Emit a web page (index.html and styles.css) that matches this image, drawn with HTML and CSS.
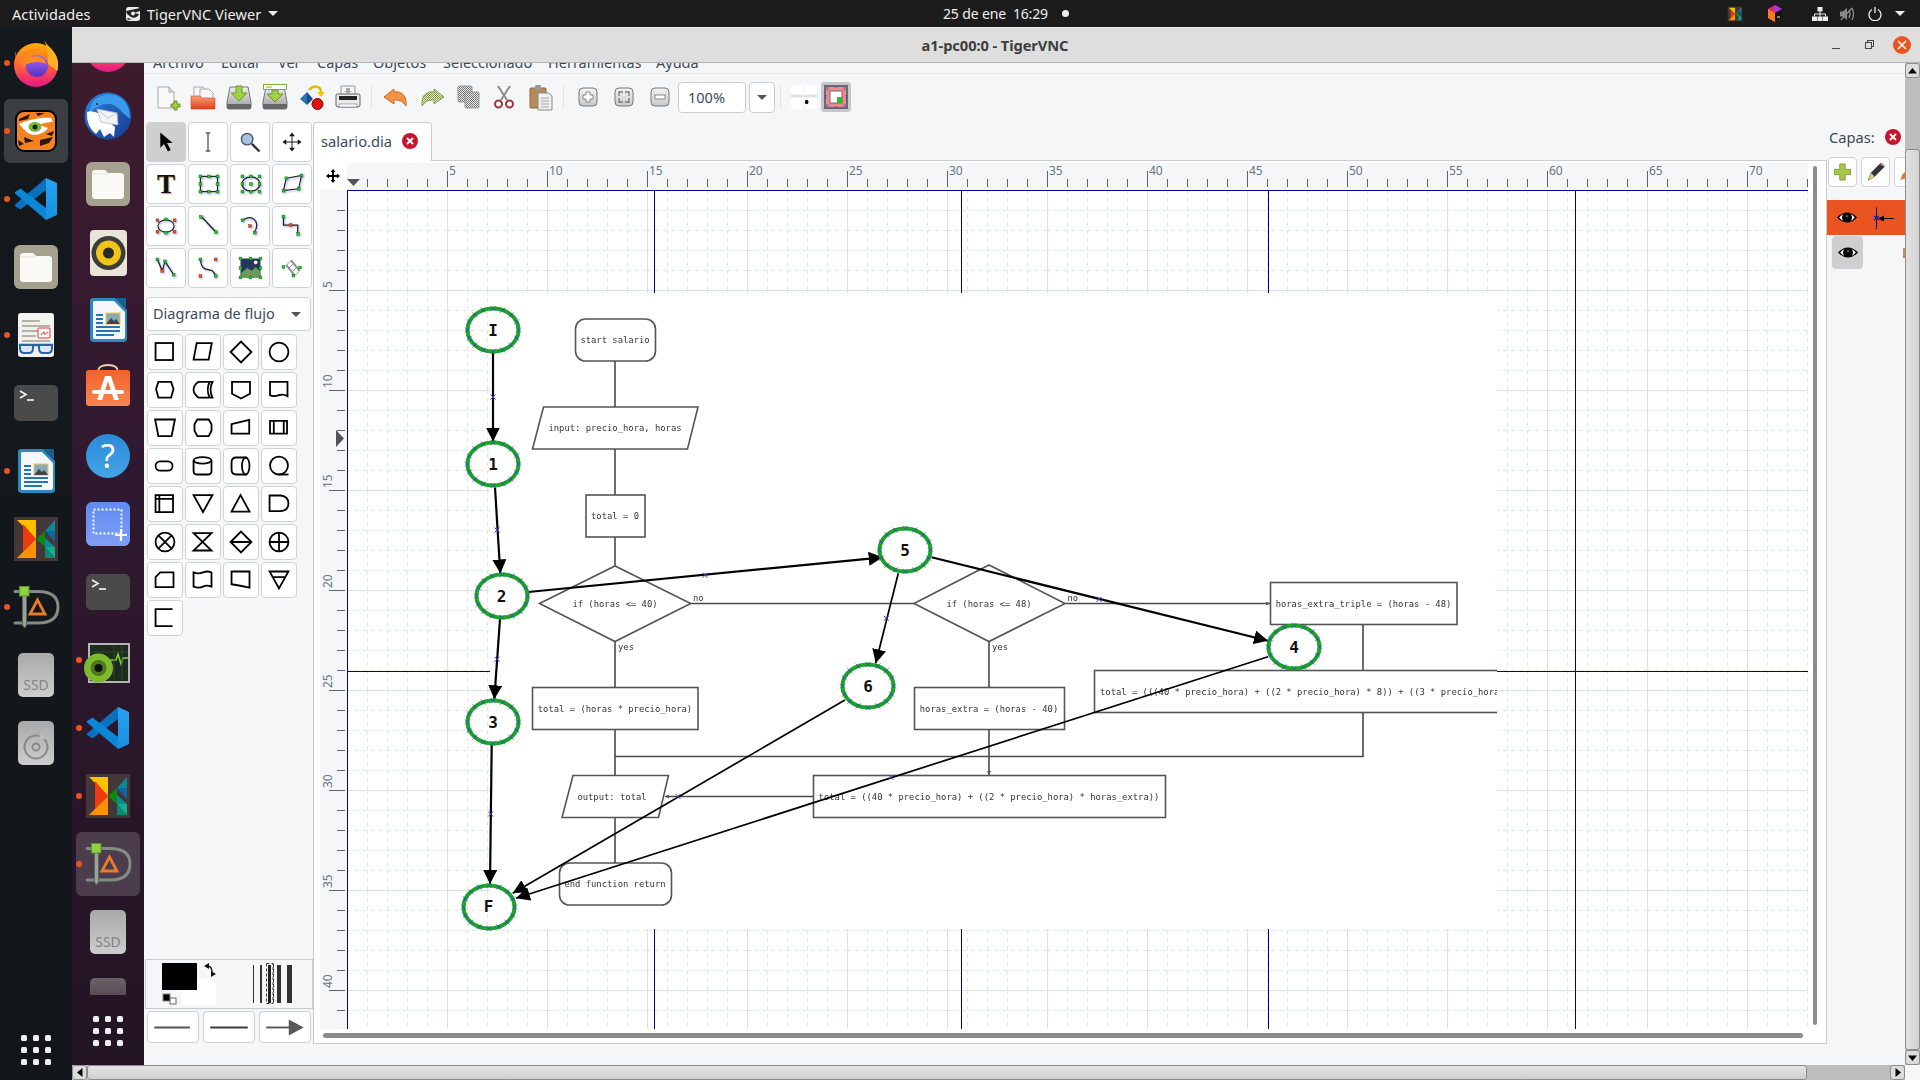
FILE: index.html
```html
<!DOCTYPE html>
<html lang="es">
<head>
<meta charset="utf-8">
<title>a1-pc00:0 - TigerVNC</title>
<link rel="stylesheet" href="styles.css">
</head>
<body>
<svg class="defs" aria-hidden="true">
  <defs>
    <linearGradient id="g-ff" x1="0" y1="0" x2="0" y2="1"><stop offset="0" stop-color="#ffb000"/><stop offset=".55" stop-color="#ff5c3a"/><stop offset="1" stop-color="#e3158e"/></linearGradient>
    <linearGradient id="g-ffp" x1="0" y1="0" x2="0" y2="1"><stop offset="0" stop-color="#a06cf0"/><stop offset="1" stop-color="#5a2fc0"/></linearGradient>
    <linearGradient id="g-bird" x1="0" y1="0" x2="1" y2="1"><stop offset="0" stop-color="#2a86dc"/><stop offset="1" stop-color="#1a3790"/></linearGradient>
    <linearGradient id="g-ssd" x1="0" y1="0" x2="0" y2="1"><stop offset="0" stop-color="#a9a9a9"/><stop offset="1" stop-color="#cdcdcd"/></linearGradient>
    <linearGradient id="g-store" x1="0" y1="0" x2="0" y2="1"><stop offset="0" stop-color="#f2622c"/><stop offset="1" stop-color="#f98650"/></linearGradient>
    <linearGradient id="g-help" x1="0" y1="0" x2="0" y2="1"><stop offset="0" stop-color="#2a8ad8"/><stop offset="1" stop-color="#45a4e6"/></linearGradient>
    <linearGradient id="g-shot" x1="0" y1="0" x2="0" y2="1"><stop offset="0" stop-color="#5f8af0"/><stop offset="1" stop-color="#7f9ef5"/></linearGradient>
    <linearGradient id="g-code" x1="0" y1="0" x2="0" y2="1"><stop offset="0" stop-color="#27a3f2"/><stop offset="1" stop-color="#1a8fe0"/></linearGradient>
    <linearGradient id="g-disk" x1="0" y1="0" x2="0" y2="1"><stop offset="0" stop-color="#f0f0f0"/><stop offset="1" stop-color="#9a9a9a"/></linearGradient>
    <linearGradient id="g-fold" x1="0" y1="0" x2="0" y2="1"><stop offset="0" stop-color="#f8a27a"/><stop offset="1" stop-color="#df4016"/></linearGradient>
    <linearGradient id="g-dark" x1="0" y1="0" x2="0" y2="1"><stop offset="0" stop-color="#6b6068"/><stop offset="1" stop-color="#3a2c37"/></linearGradient>
    <linearGradient id="g-zb" x1="0" y1="0" x2="0" y2="1"><stop offset="0" stop-color="#f4f4f4"/><stop offset="1" stop-color="#c8c8c8"/></linearGradient>
    <pattern id="chk" width="2" height="2" patternUnits="userSpaceOnUse"><rect width="2" height="2" fill="#f2f2f2"/><rect width="1" height="1" fill="#6e6e6e"/><rect x="1" y="1" width="1" height="1" fill="#6e6e6e"/></pattern>
    <pattern id="chkg" width="2" height="2" patternUnits="userSpaceOnUse"><rect width="2" height="2" fill="#e6edd2"/><rect width="1" height="1" fill="#7c9a3a"/><rect x="1" y="1" width="1" height="1" fill="#7c9a3a"/></pattern>
    <symbol id="eye" viewBox="0 0 24 16"><path d="M1 8Q12-3 23 8Q12 19 1 8Z" fill="#000"/><path d="M3.500 8Q6 5 8 4.400A5 5 0 0 0 8 11.600Q6 11 3.500 8ZM20.500 8Q18 5 16 4.400A5 5 0 0 1 16 11.600Q18 11 20.500 8Z" fill="#fff"/><circle cx="12" cy="6.500" r="1.300" fill="#555"/></symbol>
    <symbol id="d-ff" viewBox="0 0 48 48"><circle cx="24" cy="26" r="22" fill="url(#g-ff)"/><path d="M32 1c3 5 6 7 9 11 5 6 6 13 4.500 20L36 25c0-9 0-16-4-24Z" fill="#ffb01f"/><path d="M3 12c1 4 2 7 5 8 3-8 14-12 21-9-5 0-9 3-11 7 6-2 13 2 14 9-6-3-15-1-21 1-4-3-8-8-8-16Z" fill="#ff7a2e"/><circle cx="25" cy="27" r="11" fill="url(#g-ffp)"/><path d="M10 20c4-8 14-12 20-9-5 0-9 3-11 7 6-2 14 0 15 7-6-3-14-2-19 0-2-1-4-3-5-5Z" fill="#ff8c1a"/></symbol>
    <symbol id="d-vnc" viewBox="0 0 48 48"><rect x="3" y="3" width="42" height="42" rx="9" fill="#000"/><rect x="5" y="5" width="38" height="38" rx="7" fill="#f58220"/><path d="M7 17c8-4 22-7 32-6l2 4c-6 0-10 1-14 3l9 3c-4 6-14 9-20 5-4-3-6-6-9-9Z" fill="#fff"/><ellipse cx="23" cy="20" rx="6.500" ry="5" fill="#7db53b"/><circle cx="23" cy="20" r="2.500" fill="#0d2a0d"/><path d="M7 12l11-5-2 5-9 2ZM24 6l9 0-7 3ZM42 24l-8 3 6 2ZM12 30l10 4-9 2ZM28 33l13-3-4 6-9 3ZM6 33l6 4-5 2Z" fill="#2a1608"/></symbol>
    <symbol id="d-code" viewBox="0 0 48 48"><path d="M34 3V15L8.500 34.500L3 31V29.500Z" fill="#0a72bc"/><path d="M34 45V33L8.500 13.500L3 17V18.500Z" fill="#0c86d6"/><path d="M34 3L45 8V40L34 45V33V15Z" fill="url(#g-code)"/></symbol>
    <symbol id="d-files" viewBox="0 0 48 48"><rect x="2" y="2" width="44" height="44" rx="6" fill="#a6a08e"/><path d="M8 13q0-3 3-3h10l3 3h13q3 0 3 3v20q0 3-3 3H11q-3 0-3-3Z" fill="#fbfaf6"/><path d="M8 14h16" stroke="#e4e1d8"/></symbol>
    <symbol id="d-doc" viewBox="0 0 48 48"><rect x="6" y="2" width="36" height="44" rx="3" fill="#f2f2ee"/><path d="M10 10h18M10 15h28M10 20h16M10 25h14M10 30h28" stroke="#b5b2a6" stroke-width="2"/><rect x="26" y="17" width="12" height="10" rx="1" fill="#f7f7f7" stroke="#e23a3a"/><path d="M29 24q4-5 3-2t4-1" stroke="#e23a3a" fill="none"/><path d="M7 34h34" stroke="#2a64a8" stroke-width="2.500"/><path d="M8 34h13v3q0 5-4 5h-5q-4 0-4-5ZM27 34h13v3q0 5-4 5h-5q-4 0-4-5Z" fill="#dfe6ee" stroke="#2a64a8" stroke-width="2"/></symbol>
    <symbol id="d-term" viewBox="0 0 48 48"><rect x="2" y="6" width="44" height="36" rx="5" fill="#4a4a4a"/><path d="M8 12l6 3.500-6 3.500" fill="none" stroke="#eee" stroke-width="1.700"/><path d="M15 21h7" stroke="#eee" stroke-width="1.700"/></symbol>
    <symbol id="d-writer" viewBox="0 0 48 48"><path d="M9 2h22l12 12v28q0 4-4 4H10q-4 0-4-4V5q0-3 3-3Z" fill="#2e88c0"/><path d="M10 5h20l11 11v25q0 2-2 2H10q-1 0-1-2V7q0-2 1-2Z" fill="#f4f7fa"/><path d="M31 2h11v11Z" fill="#1a5e90"/><g stroke="#2178b5" stroke-width="2"><path d="M12 19h7M12 23h7M12 27h7M12 31h24M12 35h24M12 39h18"/></g><rect x="22" y="17" width="14" height="11" fill="#8ab" stroke="#f7c843"/><path d="M22 28l5-6 3 3 2-2 4 5Z" fill="#444"/></symbol>
    <symbol id="d-kite" viewBox="0 0 48 48"><rect x="2" y="2" width="44" height="44" fill="#44373a"/><path d="M5 5h19v19Z" fill="#ffc000"/><path d="M11 9l13 15L11 37Z" fill="#ee3a10"/><path d="M5 43L24 24V43Z" fill="#ff9000"/><path d="M24 24l9-8v16Z" fill="#0a8a10"/><path d="M33 16L43 5V16Z" fill="#0e8a96"/><path d="M33 16h10v11L33 16Z" fill="#1068a0"/><path d="M33 32l10 0-10-9Z" fill="#0e8a96"/><path d="M33 32h10v11Z" fill="#11b08a"/><path d="M33 32v11h10Z" fill="#0a8a78"/></symbol>
    <symbol id="d-dia" viewBox="0 0 48 48"><path d="M3 8.500H26Q46 8.500 46 24 46 40 26 40H3" fill="none" stroke="#838c83" stroke-width="3" stroke-linecap="round"/><path d="M10.500 10V42L12.500 45 14.500 42V10Z" fill="#9aa39a" stroke="#5c645c"/><rect x="7.500" y="3.500" width="9.500" height="9.500" fill="#8fd13f" stroke="#5e8e2a"/><path d="M25.500 17L18 31H33Z" fill="none" stroke="#e97b2d" stroke-width="2.800"/></symbol>
    <symbol id="d-ssd" viewBox="0 0 48 48"><rect x="6" y="2" width="36" height="44" rx="5" fill="url(#g-ssd)"/></symbol>
    <symbol id="d-disc" viewBox="0 0 48 48"><rect x="6" y="2" width="36" height="44" rx="5" fill="url(#g-ssd)"/><circle cx="24" cy="28" r="11.500" fill="none" stroke="#8a8a8a" stroke-width="2"/><circle cx="24" cy="28" r="3.500" fill="none" stroke="#8a8a8a" stroke-width="2"/><path d="M28 16l4 4" stroke="#bdbdbd" stroke-width="3"/></symbol>
    <symbol id="d-disc2" viewBox="0 0 48 48"><rect x="6" y="2" width="36" height="44" rx="5" fill="url(#g-dark)"/></symbol>
    <symbol id="d-bird" viewBox="0 0 48 48"><circle cx="24" cy="24" r="23.500" fill="url(#g-bird)"/><path d="M10 8Q22-1 34 4 46 10 46 27L39 21Q30 10 20 12 12 14 5 22 6 14 10 8Z" fill="#3a9bec"/><path d="M3 20Q2 34 12 42L16 37 20 45 26 41 30 45 31 35 16 22Q8 18 3 20Z" fill="#fff"/><path d="M13 17L33 21 34 33 17 30Z" fill="#f2f3f7" stroke="#b7bcc9" stroke-width=".8"/><path d="M13 17L24 26 33 21" fill="none" stroke="#b7bcc9" stroke-width=".8"/><circle cx="13" cy="12" r="1" fill="#123"/></symbol>
    <symbol id="d-rhythm" viewBox="0 0 48 48"><rect x="6" y="2" width="37" height="46" rx="4" fill="#e9e5d9"/><circle cx="24.500" cy="25" r="17" fill="#3c3c38"/><circle cx="24.500" cy="25" r="12.500" fill="#f0c419"/><circle cx="24.500" cy="25" r="5.500" fill="#2a2a28"/></symbol>
    <symbol id="d-store" viewBox="0 0 48 48"><path d="M14 8q0-7 10-7t10 7" fill="none" stroke="#eccdaa" stroke-width="1.800"/><rect x="2" y="6" width="44" height="36" rx="3" fill="url(#g-store)"/><path d="M21 12h6l8 24h-5l-6-19-6 19h-5Z" fill="#fff"/><rect x="8" y="26" width="32" height="4" rx="2" fill="#fff"/></symbol>
    <symbol id="d-help" viewBox="0 0 48 48"><circle cx="24" cy="24" r="22" fill="url(#g-help)"/></symbol>
    <symbol id="d-shot" viewBox="0 0 48 48"><rect x="2" y="2" width="44" height="44" rx="6" fill="url(#g-shot)"/><rect x="9.500" y="9.500" width="28" height="24" fill="none" stroke="#fff" stroke-width="2" stroke-dasharray="2 2"/><path d="M37 29v12M31 35h12" stroke="#fff" stroke-width="2.200"/></symbol>
    <symbol id="d-mon" viewBox="0 0 48 48"><rect x="5" y="8" width="40" height="38" fill="#1e2a1e" stroke="#b5b5b5" stroke-width="2"/><path d="M26 24h6l2-6 3 10 2-6h6" fill="none" stroke="#7fd13b" stroke-width="1.500"/><path d="M30 10v34M38 10v34M7 16h36" stroke="#2f4a2f"/><circle cx="14.500" cy="32" r="14.500" fill="#7fb92f"/><circle cx="14.500" cy="32" r="8" fill="#4d7a1a"/><circle cx="14.500" cy="32" r="4" fill="#111"/></symbol>
  </defs>
</svg>

<header class="topbar">
  <span class="tb-act">Actividades</span>
  <span class="tb-app">
    <svg class="tb-appic" width="16" height="16" viewBox="0 0 16 16"><rect x="1" y="1" width="14" height="14" rx="3" fill="#eee"/><path d="M1 5l14-3v3L9 7l5 1c-1 3-5 5-8 3L2 8Z" fill="#222"/><circle cx="8" cy="7.500" r="2" fill="#eee"/><path d="M2 12l5 1-4 1Z" fill="#222"/></svg>
    TigerVNC Viewer
    <i class="caret"></i>
  </span>
  <span class="tb-clock">25 de ene&nbsp; 16:29</span>
  <i class="tb-dot"></i>
  <span class="tb-right">
    <svg width="16" height="16" viewBox="0 0 48 48"><use href="#d-kite"/></svg>
    <svg class="tr-jet" width="16" height="18" viewBox="0 0 16 18"><path d="M8 0l7 4v9l-7 4-7-4V4Z" fill="#e0218a"/><path d="M8 0l7 4-7 4Z" fill="#9b3fd8"/><path d="M1 4l7 4v9l-7-4Z" fill="#ff7a1a"/><path d="M8 8l7-4v9l-7 4Z" fill="#111"/><path d="M10 12h3" stroke="#fff"/></svg>
    <svg width="16" height="14" viewBox="0 0 16 14" class="tr-net"><path d="M5.500 0h5v4.500h-5ZM0 9.500h5v4.500H0ZM5.500 9.500h5v4.500h-5ZM11 9.500h5v4.500h-5Z" fill="#eee"/><path d="M8 4.500V9.500M2.500 9.500V7h11v2.500" stroke="#eee" fill="none"/></svg>
    <svg width="16" height="14" viewBox="0 0 16 14" class="tr-vol"><path d="M0 4.500h3L7 1v12L3 9.500H0Z" fill="#8a8a8a"/><path d="M9 3q2 4 0 8M12 1q3 6 0 12" stroke="#8a8a8a" fill="none" stroke-width="1.300"/><path d="M1 13L12 1" stroke="#8a8a8a" stroke-width="1.300"/></svg>
    <svg width="14" height="14" viewBox="0 0 14 14" class="tr-pow"><path d="M4 2.500a6 6 0 1 0 6 0M7 0v6" stroke="#eee" fill="none" stroke-width="1.300"/></svg>
    <i class="caret"></i>
  </span>
</header>

<div class="desktop">
  <nav class="dock dock-outer">
    <div class="dock-items">
      <div class="dk run"><span class="tile"><svg class="di"><use href="#d-ff"/></svg></span></div>
      <div class="dk run"><span class="tile on"><svg class="di"><use href="#d-vnc"/></svg></span></div>
      <div class="dk run"><span class="tile"><svg class="di"><use href="#d-code"/></svg></span></div>
      <div class="dk"><span class="tile"><svg class="di"><use href="#d-files"/></svg></span></div>
      <div class="dk run"><span class="tile"><svg class="di"><use href="#d-doc"/></svg></span></div>
      <div class="dk"><span class="tile"><svg class="di"><use href="#d-term"/></svg></span></div>
      <div class="dk run"><span class="tile"><svg class="di"><use href="#d-writer"/></svg></span></div>
      <div class="dk"><span class="tile"><svg class="di"><use href="#d-kite"/></svg></span></div>
      <div class="dk run"><span class="tile"><svg class="di"><use href="#d-dia"/></svg></span></div>
      <div class="dk"><span class="tile"><svg class="di"><use href="#d-ssd"/></svg><span class="ssd">SSD</span></span></div>
      <div class="dk"><span class="tile"><svg class="di"><use href="#d-disc"/></svg></span></div>
    </div>
    <div class="apps apps-outer"><i></i><i></i><i></i><i></i><i></i><i></i><i></i><i></i><i></i></div>
  </nav>

  <main class="window">
    <div class="titlebar">
      <span></span>
      <span class="title">a1-pc00:0 - TigerVNC</span>
      <span class="wctl">
        <span class="wb"><i class="w-min"></i></span>
        <span class="wb"><i class="w-max"></i></span>
        <span class="wb"><i class="w-close"><svg width="10" height="10" viewBox="0 0 10 10"><path d="M1 1l8 8M9 1L1 9" stroke="#fff" stroke-width="1.500"/></svg></i></span>
      </span>
    </div>

    <div class="view">
      <div class="view-row">
        <nav class="dock dock-inner">
          <div class="dock-items">
            <div class="dk dk-first"><span class="tile"><svg class="di"><use href="#d-ff"/></svg></span></div>
            <div class="dk"><span class="tile"><svg class="di"><use href="#d-bird"/></svg></span></div>
            <div class="dk"><span class="tile"><svg class="di"><use href="#d-files"/></svg></span></div>
            <div class="dk"><span class="tile"><svg class="di"><use href="#d-rhythm"/></svg></span></div>
            <div class="dk"><span class="tile"><svg class="di"><use href="#d-writer"/></svg></span></div>
            <div class="dk"><span class="tile"><svg class="di"><use href="#d-store"/></svg></span></div>
            <div class="dk"><span class="tile"><svg class="di"><use href="#d-help"/></svg><span class="qm">?</span></span></div>
            <div class="dk"><span class="tile"><svg class="di"><use href="#d-shot"/></svg></span></div>
            <div class="dk"><span class="tile"><svg class="di"><use href="#d-term"/></svg></span></div>
            <div class="dk run"><span class="tile"><svg class="di"><use href="#d-mon"/></svg></span></div>
            <div class="dk run"><span class="tile"><svg class="di"><use href="#d-code"/></svg></span></div>
            <div class="dk run"><span class="tile"><svg class="di"><use href="#d-kite"/></svg></span></div>
            <div class="dk run"><span class="tile on"><svg class="di"><use href="#d-dia"/></svg></span></div>
            <div class="dk"><span class="tile"><svg class="di"><use href="#d-ssd"/></svg><span class="ssd">SSD</span></span></div>
            <div class="dk"><span class="tile"><svg class="di"><use href="#d-disc2"/></svg></span></div>
          </div>
          <div class="apps apps-inner"><i></i><i></i><i></i><i></i><i></i><i></i><i></i><i></i><i></i></div>
        </nav>

        <section class="app">
          <div class="menubar"><div class="menu-in"><span>Archivo</span><span>Editar</span><span>Ver</span><span>Capas</span><span>Objetos</span><span>Seleccionado</span><span>Herramientas</span><span>Ayuda</span></div></div>

          <div class="toolbar">
            <svg class="tbi" viewBox="0 0 36 30"><path d="M8 5h11l5 5v16H8Z" fill="#f8f8f8" stroke="#aaa"/><path d="M19 5v5h5" fill="#ddd" stroke="#aaa"/><path d="M24 19h3v3h3v3h-3v3h-3v-3h-3v-3h3Z" fill="#a5c84a" stroke="#6f8f25"/></svg>
            <svg class="tbi" viewBox="0 0 36 30"><path d="M8 5h9l3 3v9H8Z" fill="#f6f6f6" stroke="#aaa"/><path d="M14 7h9l4 4v9H14Z" fill="#f6f6f6" stroke="#aaa"/><path d="M5 14h9l2 2h13v11H5Z" fill="url(#g-fold)" stroke="#c9481f" stroke-width=".6"/></svg>
            <svg class="tbi" viewBox="0 0 36 30"><path d="M8 5h18l3 15v5q0 2-2 2H7q-2 0-2-2v-5Z" fill="url(#g-disk)" stroke="#777"/><path d="M5 22h24v3q0 2-2 2H7q-2 0-2-2Z" fill="#666"/><path d="M14 4h6v7h5l-8 8-8-8h5Z" fill="#a2d145" stroke="#6f9a22"/></svg>
            <svg class="tbi" viewBox="0 0 36 30"><path d="M8 5h18l3 15v5q0 2-2 2H7q-2 0-2-2v-5Z" fill="url(#g-disk)" stroke="#777"/><path d="M5 22h24v3q0 2-2 2H7q-2 0-2-2Z" fill="#666"/><rect x="5.500" y="2.500" width="23" height="5" fill="#fff" stroke="#7fb02a"/><path d="M8 5h6" stroke="#7fb02a"/><path d="M14 8h6v4h5l-8 8-8-8h5Z" fill="#a2d145" stroke="#6f9a22"/></svg>
            <svg class="tbi" viewBox="0 0 36 30"><path d="M13 10L6 17l7 6Z" fill="#2a6fb0"/><path d="M13 10l6 7-6 6Z" fill="#1a4a8c"/><circle cx="23.500" cy="22" r="5.500" fill="#e01010" stroke="#900"/><path d="M15 8q4-5 9-3 3 1 3 6" fill="none" stroke="#e8b90c" stroke-width="2.400"/><path d="M23 10l4 5 4-5Z" fill="#f2c610"/></svg>
            <svg class="tbi" viewBox="0 0 36 30"><path d="M11 4h14v9H11Z" fill="#f5f5f5" stroke="#999"/><path d="M16 6h4v3h2l-4 3-4-3h2Z" fill="#aaa"/><path d="M7 12h22q1 0 1 2v9q0 2-2 2H8q-2 0-2-2v-9q0-2 1-2Z" fill="#e9e9e9" stroke="#666"/><rect x="9" y="14" width="18" height="4" fill="#222"/><rect x="9" y="22" width="18" height="3" fill="#fff" stroke="#777" stroke-width=".6"/></svg>
            <i class="sep"></i>
            <svg class="tbi" viewBox="0 0 36 30"><path d="M16 7l-10 8 10 7v-4q8-1 12 6 1-10-5-13-3-2-7-1Z" fill="#f09248" stroke="#d06a22"/></svg>
            <svg class="tbi" viewBox="0 0 36 30"><path d="M20 7l10 8-10 7v-4q-8-1-12 6-1-10 5-13 3-2 7-1Z" fill="url(#chkg)" stroke="#8aa64a"/></svg>
            <svg class="tbi" viewBox="0 0 36 30"><rect x="8" y="4" width="14" height="16" rx="1" fill="url(#chk)" stroke="#999"/><rect x="15" y="10" width="14" height="16" rx="1" fill="url(#chk)" stroke="#999"/></svg>
            <svg class="tbi" viewBox="0 0 36 30"><path d="M12 4l9 14M24 4l-9 14" stroke="#8a8a8a" stroke-width="2"/><circle cx="12.500" cy="22" r="3.500" fill="none" stroke="#a03a3a" stroke-width="2"/><circle cx="23.500" cy="22" r="3.500" fill="none" stroke="#a03a3a" stroke-width="2"/></svg>
            <svg class="tbi" viewBox="0 0 36 30"><rect x="8" y="6" width="16" height="20" rx="1" fill="#b38a5a" stroke="#8a6a40"/><rect x="13" y="3" width="6" height="5" rx="1" fill="#9a9a9a"/><path d="M16 11h11l3 3v14H16Z" fill="#eee" stroke="#8a8a8a"/><path d="M19 16h8M19 19h8M19 22h8M19 25h8" stroke="#aaa"/></svg>
            <i class="sep"></i>
            <svg class="tbi" viewBox="0 0 36 30"><rect x="9" y="6" width="18" height="18" rx="4" fill="url(#g-zb)" stroke="#777"/><path d="M16 10h4v3h3v4h-3v3h-4v-3h-3v-4h3Z" fill="#fff" stroke="#888"/></svg>
            <svg class="tbi" viewBox="0 0 36 30"><rect x="9" y="6" width="18" height="18" rx="4" fill="url(#g-zb)" stroke="#777"/><path d="M13 14v-4h4M19 10h4v4M13 16v4h4M19 20h4v-4" fill="none" stroke="#777" stroke-width="1.300"/></svg>
            <svg class="tbi" viewBox="0 0 36 30"><rect x="9" y="6" width="18" height="18" rx="4" fill="url(#g-zb)" stroke="#777"/><rect x="13" y="13" width="10" height="4" fill="#fff" stroke="#888"/></svg>
            <div class="combo">100%</div>
            <div class="combo-btn"><i class="caret dark"></i></div>
            <i class="sep sep2"></i>
            <svg class="snap" viewBox="0 0 26 24"><rect width="26" height="24" fill="#fff"/><path d="M0 11h26" stroke="#dde6e4" stroke-width="3"/><path d="M13 0v24" stroke="#eef2f1"/><ellipse cx="15.700" cy="17" rx="1.800" ry="2.300" fill="#111"/></svg>
            <span class="snapobj"><svg width="24" height="24" viewBox="0 0 24 24"><rect x="1" y="1" width="22" height="22" fill="#f08a8a" stroke="#6a6a6a" stroke-width="2"/><rect x="6" y="6" width="12" height="12" fill="#fff" stroke="#6a6a6a" stroke-width="1"/><rect x="13" y="12" width="5" height="6" fill="#2cc02c"/><path d="M2 2l3 3M5 2L2 5M10 0l3 3M13 0l-3 3M19 2l3 3M22 2l-3 3M2 19l3 3M5 19l-3 3M19 19l3 3M22 19l-3 3M0 10l3 3M3 10l-3 3M21 10l3 3M24 10l-3 3M10 21l3 3M13 21l-3 3" stroke="#4a4ae8" stroke-width=".7"/></svg></span>
          </div>

          <div class="main">
            <aside class="tools">
              <div class="tool-grid">
                <div class="tool sel"><svg viewBox="0 0 40 40"><path d="M14 10V26l4-4 4 8 3-1.500-4-7.500h6Z" fill="#000"/></svg></div>
                <div class="tool"><svg viewBox="0 0 40 40"><path d="M17.500 10.500h5M17.500 29.500h5M20 10.500v19" stroke="#111" fill="none"/></svg></div>
                <div class="tool"><svg viewBox="0 0 40 40"><circle cx="17" cy="17" r="6" fill="#a8c4e4" stroke="#556"  stroke-width="1.500"/><path d="M22 22l8 8" stroke="#333" stroke-width="2.600"/></svg></div>
                <div class="tool"><svg viewBox="0 0 40 40"><path d="M20 12v16M12 20h16" stroke="#111"/><path d="M20 10l-3 4h6ZM20 30l-3-4h6ZM10 20l4-3v6ZM30 20l-4-3v6Z" fill="#111"/></svg></div>

                <div class="tool"><span class="T">T</span></div>
                <div class="tool sh"><svg viewBox="0 0 40 40"><rect x="12" y="12" width="18" height="16" fill="none" stroke="#222" stroke-width="1.200"/><g class="hg"><rect x="10.500" y="10.500" width="3" height="3"/><rect x="19.500" y="10.500" width="3" height="3"/><rect x="28.500" y="10.500" width="3" height="3"/><rect x="10.500" y="18.500" width="3" height="3"/><rect x="28.500" y="18.500" width="3" height="3"/><rect x="10.500" y="26.500" width="3" height="3"/><rect x="19.500" y="26.500" width="3" height="3"/><rect x="28.500" y="26.500" width="3" height="3"/></g></svg></div>
                <div class="tool sh"><svg viewBox="0 0 40 40"><ellipse cx="21" cy="20" rx="9.500" ry="7.500" fill="none" stroke="#222" stroke-width="1.200"/><g class="hg"><rect x="10.500" y="10.500" width="3" height="3"/><rect x="19.500" y="10.500" width="3" height="3"/><rect x="28.500" y="10.500" width="3" height="3"/><rect x="10.500" y="18.500" width="3" height="3"/><rect x="19.500" y="18.500" width="3" height="3"/><rect x="28.500" y="18.500" width="3" height="3"/><rect x="10.500" y="26.500" width="3" height="3"/><rect x="19.500" y="26.500" width="3" height="3"/><rect x="28.500" y="26.500" width="3" height="3"/></g></svg></div>
                <div class="tool sh"><svg viewBox="0 0 40 40"><path d="M14 14l16-3-3 14-16 2Z" fill="none" stroke="#222" stroke-width="1.200"/><g class="hg"><rect x="12.500" y="12.500" width="3" height="3"/><rect x="28.500" y="9.500" width="3" height="3"/><rect x="25.500" y="23.500" width="3" height="3"/><rect x="9.500" y="25.500" width="3" height="3"/></g></svg></div>

                <div class="tool sh"><svg viewBox="0 0 40 40"><ellipse cx="20" cy="20" rx="8.500" ry="6.500" fill="none" stroke="#222" stroke-width="1.200"/><g class="hg"><rect x="18.500" y="11.500" width="3" height="3"/><rect x="18.500" y="25.500" width="3" height="3"/></g><g class="ho"><rect x="9.500" y="12.500" width="3" height="3"/><rect x="27.500" y="12.500" width="3" height="3"/><rect x="9.500" y="24.500" width="3" height="3"/><rect x="27.500" y="24.500" width="3" height="3"/></g></svg></div>
                <div class="tool sh"><svg viewBox="0 0 40 40"><path d="M13 10l15 16" stroke="#222" stroke-width="1.400"/><g class="hg"><rect x="11" y="9" width="3" height="3"/><rect x="27" y="25" width="3" height="3"/></g></svg></div>
                <div class="tool sh"><svg viewBox="0 0 40 40"><path d="M12 14q9-6 14 1 3 6-2 12" fill="none" stroke="#222" stroke-width="1.300"/><g class="hg"><rect x="10.500" y="12.500" width="3" height="3"/><rect x="23.500" y="25.500" width="3" height="3"/></g><g class="ho"><rect x="18.500" y="18.500" width="3" height="3"/></g></svg></div>
                <div class="tool sh"><svg viewBox="0 0 40 40"><path d="M11 10v9h15v10" fill="none" stroke="#222" stroke-width="1.300"/><g class="hg"><rect x="9.500" y="8.500" width="3" height="3"/><rect x="25" y="27" width="3" height="3"/></g><g class="ho"><rect x="17" y="17.500" width="3" height="3"/></g></svg></div>

                <div class="tool sh"><svg viewBox="0 0 40 40"><path d="M11 11l5 12 3-10 9 14" fill="none" stroke="#222" stroke-width="1.300"/><g class="hg"><rect x="9.500" y="9.500" width="3" height="3"/><rect x="17.500" y="11.500" width="3" height="3"/><rect x="26.500" y="25.500" width="3" height="3"/></g><g class="ho"><rect x="14.500" y="21.500" width="3" height="3"/></g></svg></div>
                <div class="tool sh"><svg viewBox="0 0 40 40"><path d="M12 11c2 18 12 4 16 18" fill="none" stroke="#222" stroke-width="1.300"/><g class="hg"><rect x="10.500" y="9.500" width="3" height="3"/><rect x="26.500" y="27" width="3" height="3"/></g><g class="ho"><rect x="26.500" y="9.500" width="3" height="3"/><rect x="10.500" y="27" width="3" height="3"/></g></svg></div>
                <div class="tool"><svg viewBox="0 0 40 40"><rect x="10" y="10" width="21" height="20" fill="#23385e"/><path d="M10 26l7-6 5 3 4-4 5 5v6H10Z" fill="#6b9a5a"/><circle cx="26" cy="14" r="2" fill="#f5f0c0"/><g class="hg"><rect x="8.500" y="8.500" width="3" height="3"/><rect x="19" y="8.500" width="3" height="3"/><rect x="29.500" y="8.500" width="3" height="3"/><rect x="8.500" y="18.500" width="3" height="3"/><rect x="29.500" y="18.500" width="3" height="3"/><rect x="8.500" y="28.500" width="3" height="3"/><rect x="19" y="28.500" width="3" height="3"/><rect x="29.500" y="28.500" width="3" height="3"/></g></svg></div>
                <div class="tool"><svg viewBox="0 0 40 40"><path d="M14 17l9 11M19 12l9 11" stroke="#8a8a8a" stroke-width="2"/><path d="M14 17l5-5M23 28l5-5M17 20l5-5M20 24l5-5" stroke="#8a8a8a"/><g class="hg"><rect x="9.500" y="17.500" width="3" height="3"/><rect x="27" y="18" width="3" height="3"/><rect x="20" y="26.500" width="3" height="3"/></g></svg></div>
              </div>

              <div class="sheet-select"><span>Diagrama de flujo</span><i class="caret dark"></i></div>

              <div class="shape-grid">
                <div class="shape"><svg viewBox="0 0 36 36"><rect x="8" y="8.500" width="18.500" height="18"/></svg></div>
                <div class="shape"><svg viewBox="0 0 36 36"><path d="M11.300 8.500H27.300L24 26H8Z"/></svg></div>
                <div class="shape"><svg viewBox="0 0 36 36"><path d="M7 18L18 7 29 18 18 29Z"/></svg></div>
                <div class="shape"><svg viewBox="0 0 36 36"><circle cx="18" cy="18" r="10"/></svg></div>

                <div class="shape"><svg viewBox="0 0 36 36"><path d="M11 9.500H24.500L27 17 24.500 26H11L8.500 17Z"/></svg></div>
                <div class="shape"><svg viewBox="0 0 36 36"><path d="M13 9.500H28Q24 17 28 26H13Q8 22 8 17.500 8 13 13 9.500ZM25 9.500Q21 17 25 26"/></svg></div>
                <div class="shape"><svg viewBox="0 0 36 36"><path d="M8.500 9.500H27.500V22L18 27 8.500 22Z"/></svg></div>
                <div class="shape"><svg viewBox="0 0 36 36"><path d="M8.500 9.500H27V24.500Q23 22 18 23.500 12 25.500 8.500 23.500Z"/></svg></div>

                <div class="shape"><svg viewBox="0 0 36 36"><path d="M7.500 9H28.500L25 26.500H11Z"/></svg></div>
                <div class="shape"><svg viewBox="0 0 36 36"><path d="M12 9H24L27 14V21L24 26.500H12L9 21V14Z"/></svg></div>
                <div class="shape"><svg viewBox="0 0 36 36"><path d="M8 14L26.700 9.500V24H8Z"/></svg></div>
                <div class="shape"><svg viewBox="0 0 36 36"><path d="M8.500 10.500H26.500V24H8.500ZM12.500 10.500V24M23 10.500V24"/></svg></div>

                <div class="shape"><svg viewBox="0 0 36 36"><rect x="8" y="13" width="18" height="10" rx="5"/></svg></div>
                <div class="shape"><svg viewBox="0 0 36 36"><path d="M8 12V23Q8 27 12 27H23Q27 27 27 23V12"/><ellipse cx="17.500" cy="12" rx="9.500" ry="3.500"/></svg></div>
                <div class="shape"><svg viewBox="0 0 36 36"><path d="M24 9H13Q8 9 8 14V22Q8 27 13 27H24"/><ellipse cx="23" cy="18" rx="4" ry="9"/></svg></div>
                <div class="shape"><svg viewBox="0 0 36 36"><circle cx="18" cy="17.500" r="9.500"/><path d="M18 27H28"/></svg></div>

                <div class="shape"><svg viewBox="0 0 36 36"><path d="M8 8.500H26.500V26.500H8ZM12 8.500V26.500M8 12.500H26.500"/></svg></div>
                <div class="shape"><svg viewBox="0 0 36 36"><path d="M8 8.500H28L18 26.500Z"/></svg></div>
                <div class="shape"><svg viewBox="0 0 36 36"><path d="M8 26H27L17.500 8.500Z"/></svg></div>
                <div class="shape"><svg viewBox="0 0 36 36"><path d="M8 9H20Q28 10 28 17.500 28 25 20 25.500H8Z"/></svg></div>

                <div class="shape"><svg viewBox="0 0 36 36"><circle cx="18" cy="18" r="10"/><path d="M11 11L25 25M25 11L11 25"/></svg></div>
                <div class="shape"><svg viewBox="0 0 36 36"><path d="M8 8.500H27L8 27H27Z"/></svg></div>
                <div class="shape"><svg viewBox="0 0 36 36"><path d="M7 18L18 7 29 18 18 29ZM7 18H29"/></svg></div>
                <div class="shape"><svg viewBox="0 0 36 36"><circle cx="18" cy="18" r="10"/><path d="M18 8V28M8 18H28"/></svg></div>

                <div class="shape"><svg viewBox="0 0 36 36"><path d="M13 10H27V25.500H8V15Z"/></svg></div>
                <div class="shape"><svg viewBox="0 0 36 36"><path d="M8 10Q13 12 18 10T27 10V25Q22 23 18 25T8 25Z"/></svg></div>
                <div class="shape"><svg viewBox="0 0 36 36"><path d="M8 9H27V26Q17 24 8 22.500Z"/></svg></div>
                <div class="shape"><svg viewBox="0 0 36 36"><path d="M8 9H28L18 27ZM11.500 15H24.500"/></svg></div>

                <div class="shape"><svg viewBox="0 0 36 36"><path d="M26 8.500H8V26.500H26"/></svg></div>
              </div>

              <div class="tools-spacer"></div>

              <div class="color-box">
                <svg width="166" height="48" viewBox="145 960 166 48"><rect x="180" y="978" width="35" height="27" fill="#fff"/><rect x="161" y="963" width="35" height="27" fill="#000"/><path d="M203 966l5-3v6ZM215 974l-5-3v6Z" fill="#111"/><path d="M206 966q5 0 5 6" stroke="#111" stroke-width="1.300" fill="none"/><rect x="169" y="998" width="6" height="6" fill="#fff" stroke="#666"/><rect x="162" y="994" width="7" height="7" fill="#000" stroke="#888"/><path d="M252.500 965v38" stroke="#333"/><rect x="259" y="965" width="2" height="38" fill="#333"/><rect x="267" y="965" width="3" height="38" fill="#222"/><path d="M265.500 963.500v40h6.500v-40ZM272.500 964v39" fill="none" stroke="#222" stroke-dasharray="3 2" stroke-width=".9"/><rect x="276" y="965" width="4" height="38" fill="#333"/><rect x="286" y="965" width="5" height="38" fill="#333"/></svg>
              </div>
              <div class="line-row">
                <div class="linebtn"><svg viewBox="0 0 52 32"><path d="M6 16.500H44" stroke="#555" stroke-width="2"/></svg></div>
                <div class="linebtn"><svg viewBox="0 0 52 32"><path d="M6 16.500H46" stroke="#3a3a3a" stroke-width="2"/></svg></div>
                <div class="linebtn"><svg viewBox="0 0 52 32"><path d="M6 16.500H34" stroke="#555" stroke-width="2"/><path d="M30 8l16 8.500L30 25Z" fill="#5a5a5a"/></svg></div>
              </div>
            </aside>

            <div class="workspace">
              <div class="tabrow">
                <div class="tab">salario.dia<svg width="16" height="16" viewBox="0 0 16 16" class="tabx"><circle cx="8" cy="8" r="8" fill="#c7162b"/><path d="M5 5l6 6M11 5l-6 6" stroke="#fff" stroke-width="1.800"/></svg></div>
              </div>
              <div class="frame">
                <div class="corner"><svg width="14" height="14" viewBox="0 0 14 14"><path d="M7 0L4.500 3H6V6H3V4.500L0 7l3 2.500V8H6V11H4.500L7 14l2.500-3H8V8H11V9.500L14 7l-3-2.500V6H8V3H9.500Z" fill="#000"/></svg></div>

                <svg class="ruler-top" width="1461" height="27" viewBox="347 163 1461 27">
                  <defs>
                    <pattern id="rt" x="347" y="163" width="20" height="27" patternUnits="userSpaceOnUse"><rect x="0" y="16" width="1" height="8" fill="#5b646e"/></pattern>
                    <pattern id="rtm" x="347" y="163" width="100" height="27" patternUnits="userSpaceOnUse"><rect x="0" y="8" width="1" height="16" fill="#5b646e"/></pattern>
                  </defs>
                  <rect x="367" y="163" width="1441" height="27" fill="url(#rt)"/>
                  <rect x="447" y="163" width="1361" height="27" fill="url(#rtm)"/>
                  <path d="M347 179H360L353.500 186Z" fill="#555"/>
                  <g class="rlab">
                    <text x="449" y="175">5</text><text x="549" y="175">10</text><text x="649" y="175">15</text><text x="749" y="175">20</text><text x="849" y="175">25</text><text x="949" y="175">30</text><text x="1049" y="175">35</text><text x="1149" y="175">40</text><text x="1249" y="175">45</text><text x="1349" y="175">50</text><text x="1449" y="175">55</text><text x="1549" y="175">60</text><text x="1649" y="175">65</text><text x="1749" y="175">70</text>
                  </g>
                </svg>

                <svg class="ruler-left" width="27" height="839" viewBox="320 190 27 839">
                  <defs>
                    <pattern id="rl" x="320" y="190" width="27" height="20" patternUnits="userSpaceOnUse"><rect x="17" y="0" width="8" height="1" fill="#5b646e"/></pattern>
                    <pattern id="rlm" x="320" y="190" width="27" height="100" patternUnits="userSpaceOnUse"><rect x="9" y="0" width="16" height="1" fill="#5b646e"/></pattern>
                  </defs>
                  <rect x="320" y="210" width="27" height="819" fill="url(#rl)"/>
                  <rect x="320" y="290" width="27" height="739" fill="url(#rlm)"/>
                  <path d="M336 430L344 438.500L336 447Z" fill="#555"/>
                  <g class="rlab">
                    <text transform="rotate(-90 332 288)" x="332" y="288">5</text><text transform="rotate(-90 332 388)" x="332" y="388">10</text><text transform="rotate(-90 332 488)" x="332" y="488">15</text><text transform="rotate(-90 332 588)" x="332" y="588">20</text><text transform="rotate(-90 332 688)" x="332" y="688">25</text><text transform="rotate(-90 332 788)" x="332" y="788">30</text><text transform="rotate(-90 332 888)" x="332" y="888">35</text><text transform="rotate(-90 332 988)" x="332" y="988">40</text>
                  </g>
                </svg>

                <svg class="canvas" width="1461" height="839" viewBox="347 190 1461 839">
                  <defs>
                    <pattern id="grid" x="347" y="190" width="100" height="100" patternUnits="userSpaceOnUse">
                      <g stroke="#dfe9e7" stroke-width="1" stroke-dasharray="4 4" fill="none">
                        <path d="M20.500 0V100M40.500 0V100M60.500 0V100M80.500 0V100M0 20.500H100M0 40.500H100M0 60.500H100M0 80.500H100"/>
                      </g>
                      <path d="M.5 0V100M0 .5H100" stroke="#d6e5e2" fill="none"/>
                    </pattern>
                    <clipPath id="pg"><rect x="490" y="293" width="1007" height="636"/></clipPath>
                    <marker id="ah" viewBox="0 0 14 14" refX="14" refY="7" markerWidth="14" markerHeight="14" markerUnits="userSpaceOnUse" orient="auto"><path d="M0 0L14 7L0 14Z" fill="#000"/></marker>
                    <marker id="fa" viewBox="0 0 4 4" refX="4" refY="2" markerWidth="4" markerHeight="4" markerUnits="userSpaceOnUse" orient="auto"><path d="M0 0L4 2L0 4Z" fill="#555"/></marker>
                    <path id="xm" d="M-2.500-2.500L2.500 2.500M-2.500 2.500L2.500-2.500" stroke="#3c3ce0" stroke-width="1" fill="none"/>
                    <g id="node">
                      <ellipse rx="25.500" ry="21.500" fill="none" stroke="#19a81e" stroke-width="4"/>
                      <path d="M23-2.500l5 5m-5 0l5-5M21.100 5.700l5 5m-5 0l5-5M15.500 12.700l5 5m-5 0l5-5M7.300 17.400l5 5m-5 0l5-5M-2.500 19l5 5m-5 0l5-5M-12.300 17.400l5 5m-5 0l5-5M-20.500 12.700l5 5m-5 0l5-5M-26.100 5.700l5 5m-5 0l5-5M-28-2.500l5 5m-5 0l5-5M-26.100-10.700l5 5m-5 0l5-5M-20.500-17.700l5 5m-5 0l5-5M-12.300-22.400l5 5m-5 0l5-5M-2.500-24l5 5m-5 0l5-5M7.300-22.400l5 5m-5 0l5-5M15.500-17.700l5 5m-5 0l5-5M21.100-10.700l5 5m-5 0l5-5" stroke="#3c3ce0" stroke-width=".9" opacity=".8" fill="none"/>
                    </g>
                  </defs>
                  <rect x="347" y="190" width="1461" height="839" fill="#fff"/>
                  <rect x="347" y="190" width="1461" height="839" fill="url(#grid)"/>
                  <path d="M347.500 190V1029M347 190.500H1808M654.500 190V1029M961.500 190V1029M1268.500 190V1029M1575.500 190V1029M347 671.500H1808" stroke="#00008b" fill="none"/>

                  <g clip-path="url(#pg)">
                    <rect x="490" y="293" width="1007" height="636" fill="#fff"/>
                    <g class="flow">
                      <g class="edges">
                        <path d="M615 361V407M615 449V495M615 537V566M615 641.500V687M615 730V775M615 817V863M989 641.500V687M1363 625V670M1363 713V756.500H615M989 730V775" marker-end="url(#fa)"/>
                        <path d="M690.700 603.500H914M1065 603.500H1270" marker-end="url(#fa)"/>
                        <path d="M813 796.500H665" marker-end="url(#fa)"/>
                      </g>
                      <g class="boxes">
                        <rect x="575.500" y="319" width="80" height="42" rx="10"/>
                        <path d="M543.500 407H698L687.500 449H532.500Z"/>
                        <rect x="586" y="495" width="59" height="42"/>
                        <path d="M539.500 603.500L615 566 690.700 603.500 615 641.500Z"/>
                        <rect x="532.500" y="687.500" width="165.500" height="42"/>
                        <path d="M573 775.500H668.500L658.500 817.500H562Z"/>
                        <rect x="559.500" y="863" width="112" height="42" rx="10"/>
                        <path d="M914 603.500L989 565 1065 603.500 989 641.500Z"/>
                        <rect x="914.500" y="687.500" width="150" height="42"/>
                        <rect x="813.500" y="775.500" width="352" height="42"/>
                        <rect x="1270.500" y="582.500" width="186.500" height="42"/>
                        <rect x="1094.500" y="670.500" width="600" height="42"/>
                      </g>
                      <g class="ftext">
                        <text x="615" y="343">start salario</text>
                        <text x="615" y="431">input: precio_hora, horas</text>
                        <text x="615" y="519">total = 0</text>
                        <text x="615" y="606.500">if (horas &lt;= 40)</text>
                        <text x="615" y="711.500">total = (horas * precio_hora)</text>
                        <text x="612" y="799.500">output: total</text>
                        <text x="615" y="887">end function return</text>
                        <text x="989" y="606.500">if (horas &lt;= 48)</text>
                        <text x="989" y="711.500">horas_extra = (horas - 40)</text>
                        <text x="989" y="799.500">total = ((40 * precio_hora) + ((2 * precio_hora) * horas_extra))</text>
                        <text x="1363.500" y="606.500">horas_extra_triple = (horas - 48)</text>
                        <text class="st" x="1100" y="694.500">total = (((40 * precio_hora) + ((2 * precio_hora) * 8)) + ((3 * precio_hora) * horas_extra_triple)))</text>
                        <text class="st" x="693" y="601">no</text>
                        <text class="st" x="618" y="650">yes</text>
                        <text class="st" x="1067.500" y="601">no</text>
                        <text class="st" x="992" y="650">yes</text>
                      </g>
                    </g>
                  </g>

                  <g class="arrows">
                    <path d="M493 353V441.500" marker-end="url(#ah)"/>
                    <path d="M495 487.500L500.300 573.500" marker-end="url(#ah)"/>
                    <path d="M528.300 592L882.700 557.300" marker-end="url(#ah)"/>
                    <path d="M500 619L494.300 699.300" marker-end="url(#ah)"/>
                    <path d="M491.700 745L490 884" marker-end="url(#ah)"/>
                    <path class="th" d="M898.300 573.300L875.700 663.300" marker-end="url(#ah)"/>
                    <path d="M931.500 557.300L1268 640.700" marker-end="url(#ah)"/>
                    <path class="th" d="M845 700L512.700 893.300" marker-end="url(#ah)"/>
                    <path class="th" d="M1268 656.700L516 898.300" marker-end="url(#ah)"/>
                  </g>
                  <g>
                    <use href="#xm" x="493" y="397"/><use href="#xm" x="497" y="530"/><use href="#xm" x="705" y="575.300"/><use href="#xm" x="497" y="659.300"/><use href="#xm" x="490.700" y="814"/><use href="#xm" x="886.300" y="618.300"/><use href="#xm" x="1099" y="599.300"/><use href="#xm" x="678" y="796.500"/><use href="#xm" x="891" y="777.300"/>
                  </g>
                  <use href="#node" x="493" y="330"/><use href="#node" x="493" y="464"/><use href="#node" x="502" y="596"/><use href="#node" x="493" y="722"/><use href="#node" x="489" y="907"/><use href="#node" x="905" y="550"/><use href="#node" x="868" y="686"/><use href="#node" x="1294" y="647"/>
                  <g class="ntext">
                    <text x="493" y="336">I</text><text x="493" y="470">1</text><text x="501.500" y="602">2</text><text x="493" y="728">3</text><text x="488.500" y="912">F</text><text x="905" y="556">5</text><text x="868" y="692">6</text><text x="1294" y="653">4</text>
                  </g>
                </svg>

                <i class="thumb-v"></i>
                <i class="thumb-h"></i>
              </div>
            </div>

            <aside class="layers">
              <div class="lay-head"><span class="lay-title">Capas:</span><svg width="16" height="16" viewBox="0 0 16 16"><circle cx="8" cy="8" r="8" fill="#c7162b"/><path d="M5 5l6 6M11 5l-6 6" stroke="#fff" stroke-width="1.800"/></svg></div>
              <div class="lay-tools">
                <div class="ltool"><svg viewBox="0 0 30 30"><path d="M12 6h6v6h6v6h-6v6h-6v-6H6v-6h6Z" fill="#a4c64a" stroke="#7f9c30"/></svg></div>
                <div class="ltool"><svg viewBox="0 0 30 30"><path d="M7 24l3-8L21 5l4 4L14 20Z" fill="#333" stroke="#222" stroke-width=".6"/><path d="M20 6l2-1.500 3 3L24 9Z" fill="#d88ac0"/><path d="M7 24l3-8 4 4Z" fill="#e8c87a"/></svg></div>
                <div class="ltool"><svg viewBox="0 0 30 30"><path d="M6 24l2-6 10-10 4 4-10 10Z" fill="#e07a3a"/></svg></div>
              </div>
              <div class="lay-row on">
                <svg class="eye" viewBox="0 0 24 16"><use href="#eye"/></svg>
                <svg class="lay-prev" width="26" height="24" viewBox="0 0 26 24"><path d="M7.500 1v22" stroke="#000"/><path d="M5 10l5 4M10 10l-5 4" stroke="#1414e0" stroke-width="1.200"/><path d="M10 12.500H25" stroke="#000"/><path d="M9 12.500l6-3v6Z" fill="#000"/></svg>
              </div>
              <div class="lay-row2"><span class="eyebtn"><svg class="eye" viewBox="0 0 24 16"><use href="#eye"/></svg></span><i class="lay-mark"></i></div>
            </aside>
          </div>
        </section>

        <div class="vscroll">
          <span class="sb-btn"><svg width="9" height="6" viewBox="0 0 9 6"><path d="M0 5.500L4.500 0 9 5.500Z" fill="#000"/></svg></span>
          <span class="sb-v-gap"></span>
          <span class="sb-v-thumb"></span>
          <span class="sb-btn"><svg width="9" height="6" viewBox="0 0 9 6"><path d="M0 .5L4.500 6 9 .5Z" fill="#000"/></svg></span>
        </div>
      </div>
      <div class="hscroll">
        <span class="sb-btn"><svg width="6" height="9" viewBox="0 0 6 9"><path d="M5.500 0L0 4.500 5.500 9Z" fill="#000"/></svg></span>
        <span class="sb-h-thumb"></span>
        <span class="sb-h-gap"></span>
        <span class="sb-btn"><svg width="6" height="9" viewBox="0 0 6 9"><path d="M.5 0L6 4.500 .5 9Z" fill="#000"/></svg></span>
        <span class="sb-corner"></span>
      </div>
    </div>
  </main>
</div>
</body>
</html>
```
FILE: styles.css
```css
* { box-sizing: border-box; }
html, body { margin: 0; padding: 0; }
body {
  width: 1920px; height: 1080px; overflow: hidden;
  font-family: "Noto Sans", "Open Sans", sans-serif;
  background: #14191e; color: #3c4a5a;
}
.defs { position: absolute; width: 0; height: 0; }
i { display: block; font-style: normal; }

/* gnome top bar */
.topbar {
  height: 27px; display: flex; align-items: center;
  background: #1c1c1c; color: #eeeeec; font-size: 14.5px; position: relative;
}
.tb-act { margin-left: 12px; width: 113px; letter-spacing: .1px; }
.tb-app { display: flex; align-items: center; width: 818px; letter-spacing: .05px; }
.tb-appic { margin-right: 6px; }
.caret { width: 0; height: 0; border-left: 5px solid transparent; border-right: 5px solid transparent; border-top: 5px solid #eee; }
.tb-app .caret { margin-left: 7px; }
.caret.dark { border-top-color: #555; }
.tb-clock { font-size: 14px; width: 118px; white-space: nowrap; letter-spacing: -.15px; }
.tb-dot { width: 7px; height: 7px; border-radius: 50%; background: #eee; margin-left: 1px; }
.tb-right { margin-left: auto; display: flex; align-items: center; margin-right: 15px; }
.tb-right svg { margin-right: 24px; }
.tb-right .tr-jet { margin-right: 29px; }
.tb-right .tr-net { margin-right: 12px; }
.tb-right .tr-vol { margin-right: 12px; }
.tb-right .tr-pow { margin-right: 13px; }

.desktop { display: flex; height: 1053px; }

/* docks */
.dock { width: 72px; flex: none; display: flex; flex-direction: column; overflow: hidden; }
.dock-outer { background: linear-gradient(#14191e, #12161a); }
.dock-inner { background: linear-gradient(#3e1b2d, #301930 40%, #231423); }
.dock-items { flex: 1; min-height: 0; overflow: hidden; }
.dock-outer .dock-items { padding-top: 2px; }
.dk { height: 68px; display: flex; align-items: center; justify-content: center; position: relative; }
.dk-first { margin-top: -49px; }
.tile { width: 64px; height: 64px; border-radius: 6px; display: flex; align-items: center; justify-content: center; position: relative; }
.tile.on { background: rgba(255,255,255,.17); }
.di { width: 48px; height: 48px; display: block; }
.run::before { content: ""; position: absolute; left: 4px; top: 31px; width: 6px; height: 6px; border-radius: 50%; background: #e95420; z-index: 2; }
.ssd { position: absolute; left: 0; right: 0; bottom: 14px; text-align: center; color: #858585; font-size: 14px; line-height: 16px; }
.qm { position: absolute; left: 0; right: 0; top: 12px; text-align: center; color: #fff; font-size: 32px; line-height: 40px; }
.apps { display: grid; grid-template-columns: repeat(3, 6px); gap: 6px; justify-content: center; flex: none; }
.apps i { width: 6px; height: 6px; border-radius: 1.5px; background: #eee; }
.apps-outer { height: 64px; padding-top: 19px; grid-auto-rows: 6px; }
.apps-inner { height: 70px; padding-top: 21px; grid-auto-rows: 6px; }

/* window */
.window { flex: 1; min-width: 0; display: flex; flex-direction: column; }
.titlebar {
  height: 36px; flex: none; display: grid; grid-template-columns: 1fr auto 1fr; align-items: center;
  background: #dedede; border-top: 1px solid #e9e9e9; border-bottom: 1px solid #b4b4b4;
  padding-right: 2px;
}
.title { font-size: 14.7px; font-weight: 700; color: #3d3d3d; letter-spacing: -.1px; }
.wctl { display: flex; justify-content: flex-end; }
.wb { width: 33px; height: 20px; display: flex; align-items: center; justify-content: center; }
.w-min { width: 8px; height: 1px; background: #444; margin-top: 6px; }
.w-max { width: 7px; height: 7px; border: 1px solid #444; box-shadow: 2px -2px 0 -1px #dedede, 2px -2px 0 0 #444; }
.w-close { width: 18px; height: 18px; border-radius: 50%; background: #e95420; display: flex; align-items: center; justify-content: center; }

.view { flex: 1; min-height: 0; display: flex; flex-direction: column; }
.view-row { flex: 1; min-height: 0; display: flex; }

/* dia */
.app { flex: 1; min-width: 0; background: #f5f6f7; display: flex; flex-direction: column; }
.menubar { height: 11px; flex: none; overflow: hidden; border-bottom: 1px solid #e8eaeb; position: relative; }
.menu-in { display: flex; margin-top: -11px; padding-left: 9px; font-size: 14.5px; line-height: 20px; color: #3c4a5a; white-space: nowrap; }
.menu-in span:nth-child(1) { width: 68px; }
.menu-in span:nth-child(2) { width: 57px; }
.menu-in span:nth-child(3) { width: 39px; }
.menu-in span:nth-child(4) { width: 56px; }
.menu-in span:nth-child(5) { width: 70px; }
.menu-in span:nth-child(6) { width: 105px; }
.menu-in span:nth-child(7) { width: 108px; }

.toolbar { height: 46px; flex: none; display: flex; align-items: center; padding-left: 6px; }
.tbi { width: 36px; height: 30px; flex: none; display: block; }
.sep { width: 1px; height: 24px; background: #e3e5e7; margin: 0 6px 0 5px; flex: none; }
.sep2 { margin: 0 10px 0 5px; }
.combo { width: 67.5px; height: 31px; background: #fff; border: 1px solid #c9cdd1; border-radius: 4px; display: flex; align-items: center; padding-left: 9px; font-size: 14.5px; color: #3c4a5a; flex: none; }
.combo-btn { width: 26px; height: 31px; margin-left: 3px; background: #fff; border: 1px solid #c9cdd1; border-radius: 4px; display: flex; align-items: center; justify-content: center; flex: none; }
.snap { width: 26px; height: 24px; flex: none; }
.snapobj { margin-left: 4px; width: 30px; height: 30px; background: #c5c7c9; border-radius: 3px; display: flex; align-items: center; justify-content: center; flex: none; }

.main { flex: 1; min-height: 0; display: flex; }

.tools { width: 169px; flex: none; display: flex; flex-direction: column; padding: 2px 0 22px; }
.tool-grid { display: grid; grid-template-columns: repeat(4, 40px); grid-auto-rows: 40px; gap: 2px; margin-left: 2px; }
.tool { background: #fff; border: 1px solid #cfd3d7; border-radius: 4px; display: flex; align-items: center; justify-content: center; }
.tool.sel { background: #cfcfcf; }
.tool svg { width: 38px; height: 38px; display: block; }
.sh svg { filter: drop-shadow(1px 1px 1px #9aa0dc); }
.hg rect { fill: #27c927; stroke: #0a5a0a; stroke-width: .4; }
.ho rect { fill: #e8501a; stroke: #7a2a0a; stroke-width: .4; }
.T { font-family: "Liberation Serif", serif; font-weight: 700; font-size: 27px; line-height: 1; color: #111; text-shadow: 1px 1px 1px #b59a6a; }

.sheet-select { height: 34px; margin: 9px 2px 0; width: 165px; background: #fff; border: 1px solid #cfd3d7; border-radius: 4px; display: flex; align-items: center; justify-content: space-between; padding: 0 9px 0 6px; font-size: 14.5px; color: #3c4a5a; flex: none; }
.sheet-select span { margin-top: -2px; }
.shape-grid { display: grid; grid-template-columns: repeat(4, 36px); grid-auto-rows: 36px; gap: 2px; margin: 3px 0 0 3px; }
.shape { background: #fff; border: 1px solid #cfd3d7; border-radius: 4px; }
.shape svg { width: 34px; height: 34px; display: block; fill: none; stroke: #000; stroke-width: 1.900; }
.tools-spacer { flex: 1; }
.color-box { height: 50px; margin-left: 1px; width: 168px; background: #f5f6f7; border: 1px solid #c9cdd1; flex: none; }
.color-box svg { display: block; }
.line-row { display: flex; gap: 4px; margin: 2px 0 0 3px; flex: none; }
.linebtn { width: 52px; height: 32px; background: #fff; border: 1px solid #cfd3d7; border-radius: 4px; }
.linebtn svg { width: 50px; height: 30px; display: block; }

.workspace { width: 1514px; flex: none; display: flex; flex-direction: column; padding-bottom: 21px; }
.tabrow { height: 40px; flex: none; display: flex; align-items: flex-end; }
.tab { width: 119px; height: 39px; margin-bottom: -1px; background: #fff; border: 1px solid #c9cdd1; border-bottom: none; border-radius: 4px 4px 0 0; display: flex; align-items: center; padding: 0 0 3px 7px; font-size: 14.7px; color: #3c4a5a; position: relative; z-index: 1; }
.tabx { margin-left: 10px; }
.frame {
  flex: 1; min-height: 0; background: #fff; border: 1px solid #c9cdd1;
  padding: 2px 0 0 6px;
  display: grid; grid-template-columns: 27px 1461px 5px 4px; grid-template-rows: 27px 839px auto; align-content: start;
}
.corner { display: flex; align-items: center; justify-content: center; padding: 0 1px 1px 0; }
.ruler-top { grid-column: 2; grid-row: 1; display: block; background: #f5f6f7; }
.ruler-left { grid-column: 1; grid-row: 2; display: block; background: #f5f6f7; }
.canvas { grid-column: 2; grid-row: 2; display: block; }
.rlab text { font-family: "Noto Sans", sans-serif; font-size: 12px; fill: #677484; }
.thumb-v { grid-column: 4; grid-row: 1 / 3; margin-top: 3px; margin-bottom: 4px; background: #8c8c8c; border-radius: 2px; }
.thumb-h { grid-column: 1 / 3; grid-row: 3; height: 5px; margin: 4px 5px 0 3px; background: #8c8c8c; border-radius: 3px; }

.flow { filter: blur(.35px); }
.edges path { fill: none; stroke: #4a4a4a; stroke-width: 1.600; }
.boxes > * { fill: #fff; stroke: #555; stroke-width: 1.600; }
.ftext text { font-family: "DejaVu Sans Mono", monospace; font-size: 8.85px; fill: #333; text-anchor: middle; }
.ftext .st { text-anchor: start; }
.arrows path { fill: none; stroke: #000; stroke-width: 2.200; }
.arrows .th { stroke-width: 1.700; }
.ntext text { font-family: "DejaVu Sans Mono", monospace; font-weight: 700; font-size: 16px; fill: #111; text-anchor: middle; }

.layers { width: 78px; flex: none; overflow: hidden; display: flex; flex-direction: column; }
.lay-head { height: 34px; margin-bottom: 3px; display: flex; align-items: center; padding-left: 2px; font-size: 14.7px; color: #3c4a5a; flex: none; }
.lay-title { width: 56px; }
.lay-tools { display: flex; gap: 4px; padding-left: 1px; height: 30px; width: 120px; flex: none; }
.ltool { width: 29px; height: 30px; background: #fff; border: 1px solid #cfd3d7; border-radius: 4px; flex: none; }
.ltool svg { width: 27px; height: 28px; display: block; }
.lay-row { margin-top: 13px; height: 35px; background: #e95420; display: flex; align-items: center; padding-left: 9px; flex: none; }
.eye { width: 22px; height: 15px; display: block; }
.lay-prev { margin-left: 11px; }
.lay-row2 { padding: 1px 0 0 5px; flex: none; display: flex; align-items: center; }
.eyebtn { width: 31px; height: 33px; background: #cfcfcf; border-radius: 4px; display: flex; align-items: center; justify-content: center; flex: none; }
.lay-mark { width: 2px; height: 10px; margin-left: 40px; background: #d0894f; flex: none; }

/* vnc scrollbars */
.sb-btn { width: 15px; height: 15px; flex: none; background: #dcdcdc; border: 1px solid #8c8c8c; border-radius: 3px; display: flex; align-items: center; justify-content: center; }
.vscroll { width: 15px; flex: none; background: #bdbdbd; display: flex; flex-direction: column; }
.sb-v-gap { height: 71px; flex: none; }
.sb-v-thumb { flex: 1; background: linear-gradient(90deg, #e2e2e2, #d2d2d2); border: 1px solid #8c8c8c; border-radius: 3px; }
.hscroll { height: 15px; flex: none; display: flex; background: #bdbdbd; }
.sb-h-thumb { width: 1720px; flex: none; background: linear-gradient(#e4e4e4, #cfcfcf); border: 1px solid #8c8c8c; border-radius: 3px; }
.sb-h-gap { flex: 1; }
.sb-corner { width: 15px; background: #f7f7f7; flex: none; }
```
